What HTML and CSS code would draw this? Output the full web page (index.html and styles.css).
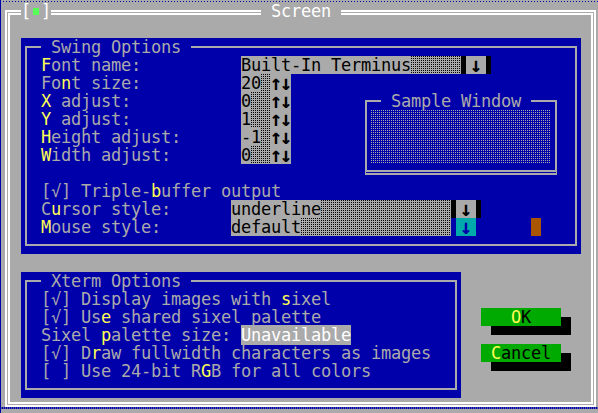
FILE: index.html
```html
<!DOCTYPE html>
<html>
<head>
<meta charset="utf-8">
<title>Screen</title>
<link rel="stylesheet" href="styles.css">
</head>
<body>
<div class="desktop">
  <div class="win">
    <div class="wframe"></div>
    <div class="wicon"><span>[</span><span class="closebox"><i></i></span><span>]</span></div>
    <div class="wtitle"> Screen </div>

    <div class="panel swing">
      <div class="pframe"></div>
      <div class="ptitle r1"> Swing Options </div>

      <div class="lbl r2"><span class="hk">F</span>ont name:</div>
      <div class="field fname r2"><span class="val">Built-In Terminus</span></div>
      <div class="drop fdrop r2"><span class="ac">↓</span></div>

      <div class="lbl r3">Fo<span class="hk">n</span>t size:</div>
      <div class="spin r3"><div class="sbox"><span class="val">20</span></div><div class="arr"><span class="ac">↑</span><span class="ac">↓</span></div></div>

      <div class="lbl r4"><span class="hk">X</span> adjust:</div>
      <div class="spin r4"><div class="sbox"><span class="val">0</span></div><div class="arr"><span class="ac">↑</span><span class="ac">↓</span></div></div>

      <div class="lbl r5"><span class="hk">Y</span> adjust:</div>
      <div class="spin r5"><div class="sbox"><span class="val">1</span></div><div class="arr"><span class="ac">↑</span><span class="ac">↓</span></div></div>

      <div class="lbl r6"><span class="hk">H</span>eight adjust:</div>
      <div class="spin r6"><div class="sbox"><span class="val">-1</span></div><div class="arr"><span class="ac">↑</span><span class="ac">↓</span></div></div>

      <div class="lbl r7"><span class="hk">W</span>idth adjust:</div>
      <div class="spin r7"><div class="sbox"><span class="val">0</span></div><div class="arr"><span class="ac">↑</span><span class="ac">↓</span></div></div>

      <div class="sample">
        <div class="sframe"></div>
        <div class="sfill"></div>
        <div class="stitle"> Sample Window </div>
      </div>

      <div class="lbl wide r9">[√] Triple-<span class="hk">b</span>uffer output</div>

      <div class="lbl r10">C<span class="hk">u</span>rsor style:</div>
      <div class="field fstyle r10"><span class="val">underline</span></div>
      <div class="drop sdrop r10"><span class="ac">↓</span></div>

      <div class="lbl r11"><span class="hk">M</span>ouse style:</div>
      <div class="field fstyle r11"><span class="val">default</span></div>
      <div class="drop sdrop cy r11"><span class="ac">↓</span></div>

      <div class="ptr"></div>
    </div>

    <div class="panel xterm">
      <div class="pframe"></div>
      <div class="ptitle r1"> Xterm Options </div>
      <div class="line r2">[√] Display images with <span class="hk">s</span>ixel</div>
      <div class="line r3">[√] Us<span class="hk">e</span> shared sixel palette</div>
      <div class="line r4">Sixel <span class="hk">p</span>alette size: <span class="na">Unavailable</span></div>
      <div class="line r5">[√] D<span class="hk">r</span>aw fullwidth characters as images</div>
      <div class="line r6">[ ] Use 24-bit R<span class="hk">G</span>B for all colors</div>
    </div>

    <div class="btn ok">   <span class="hk">O</span>K   </div>
    <div class="btn cancel"> <span class="hk">C</span>ancel </div>
  </div>
</div>
</body>
</html>
```

FILE: styles.css
```css
* { box-sizing: border-box; }
html, body { margin: 0; padding: 0; }
body {
  background: #aaaaaa;
  font-family: "DejaVu Sans Mono", "Liberation Mono", monospace;
  font-size: 17px;
  letter-spacing: -0.235px;
  line-height: 18px;
}

.desktop {
  width: 598px;
  height: 413px;
  overflow: hidden;
  padding: 2px 0 0 1px;
  background-color: #aaaaaa;
  background-image:
    repeating-linear-gradient(90deg, #0000aa 0 1px, transparent 1px 3px),
    repeating-linear-gradient(90deg, #0000aa 0 1px, #5555aa 1px 2px),
    linear-gradient(#0000aa, #0000aa);
  background-size: 100% 1px, 100% 2px, 1px 100%;
  background-position: 0 1px, 0 407px, 0 0;
  background-repeat: no-repeat;
}

.win {
  display: grid;
  width: 600px;
  height: 414px;
  grid-template-columns: repeat(60, 10px);
  grid-template-rows: repeat(23, 18px);
}

.wframe {
  grid-column: 1 / span 60;
  grid-row: 1 / span 23;
  margin: 8px 5px 9px 4px;
  border: 5px double #ffffff;
}

.wicon {
  grid-column: 3 / span 3;
  grid-row: 1;
  display: flex;
  background: #aaaaaa;
  color: #ffffff;
}
.wicon span { width: 10px; text-align: center; }
.closebox { display: flex; align-items: center; justify-content: center; }
.closebox i { display: block; width: 6px; height: 7px; background: #55ff55; }

.wtitle {
  grid-column: 27 / span 8;
  grid-row: 1;
  background: #aaaaaa;
  color: #ffffff;
  white-space: pre;
}

.panel {
  display: grid;
  background: #0000aa;
  color: #aaaaaa;
  grid-auto-columns: 10px;
  grid-auto-rows: 18px;
}
.swing {
  grid-column: 3 / span 56;
  grid-row: 3 / span 12;
  grid-template-columns: repeat(56, 10px);
  grid-template-rows: repeat(12, 18px);
}
.xterm {
  grid-column: 3 / span 44;
  grid-row: 16 / span 7;
  grid-template-columns: repeat(44, 10px);
  grid-template-rows: repeat(7, 18px);
}
.pframe {
  grid-column: 1 / -1;
  grid-row: 1 / -1;
  margin: 8px 4px;
  border: 2px solid #aaaaaa;
}
.ptitle {
  grid-column: 3 / span 15;
  background: #0000aa;
  white-space: pre;
}

.r1 { grid-row: 1; }
.r2 { grid-row: 2; }
.r3 { grid-row: 3; }
.r4 { grid-row: 4; }
.r5 { grid-row: 5; }
.r6 { grid-row: 6; }
.r7 { grid-row: 7; }
.r9 { grid-row: 9; }
.r10 { grid-row: 10; }
.r11 { grid-row: 11; }

.lbl { grid-column: 3 / span 18; white-space: pre; }
.lbl.wide { grid-column: 3 / span 30; }
.line { grid-column: 3 / span 41; white-space: pre; }
.hk { color: #ffff55; }

.field, .sbox {
  background-color: #000000;
  background-image:
    linear-gradient(90deg, transparent 1px, #aaaaaa 1px),
    linear-gradient(transparent 1px, #aaaaaa 1px);
  background-size: 2px 2px;
}
.field { display: flex; color: #000000; white-space: pre; }
.val { background: #aaaaaa; color: #000000; white-space: pre; }
.fname { grid-column: 23 / span 22; }
.fstyle { grid-column: 22 / span 22; }

.ac {
  display: flex;
  justify-content: center;
  width: 10px;
  font-size: 21px;
  font-weight: bold;
  letter-spacing: 0;
  line-height: 18px;
}

.drop {
  display: flex;
  justify-content: center;
  background: #aaaaaa;
  color: #000000;
  border-left: 5px solid #000000;
  border-right: 5px solid #000000;
}
.fdrop { grid-column: 45 / span 3; }
.sdrop { grid-column: 44 / span 3; }
.drop.cy { background: #00aaaa; color: #0000aa; border-color: #0000aa; }

.spin { grid-column: 23 / span 5; display: flex; }
.sbox { width: 30px; display: flex; }
.arr {
  display: flex;
  width: 20px;
  background: #aaaaaa;
  color: #000000;
}

.ptr { grid-column: 52; grid-row: 11; background: #aa5500; }

.sample {
  grid-column: 35 / span 20;
  grid-row: 4 / span 5;
  display: grid;
  grid-template-columns: repeat(20, 10px);
  grid-template-rows: repeat(5, 18px);
}
.sframe {
  grid-column: 1 / -1;
  grid-row: 1 / -1;
  margin: 8px 4px 7px;
  border: 2px solid #aaaaaa;
  border-bottom: 5px double #aaaaaa;
}
.sfill {
  grid-column: 2 / span 18;
  grid-row: 2 / span 3;
  background-color: #aaaaaa;
  background-image:
    linear-gradient(90deg, transparent 1px, #0000aa 1px),
    linear-gradient(transparent 1px, #0000aa 1px);
  background-size: 2px 2px;
}
.stitle {
  grid-column: 3 / span 15;
  grid-row: 1;
  background: #0000aa;
  white-space: pre;
}

.na { background: #aaaaaa; color: #ffffff; }

.btn {
  grid-column: 49 / span 8;
  background: #00aa00;
  color: #000000;
  white-space: pre;
  box-shadow: 10px 9px 0 #000000;
}
.ok { grid-row: 18; }
.cancel { grid-row: 20; }
```
